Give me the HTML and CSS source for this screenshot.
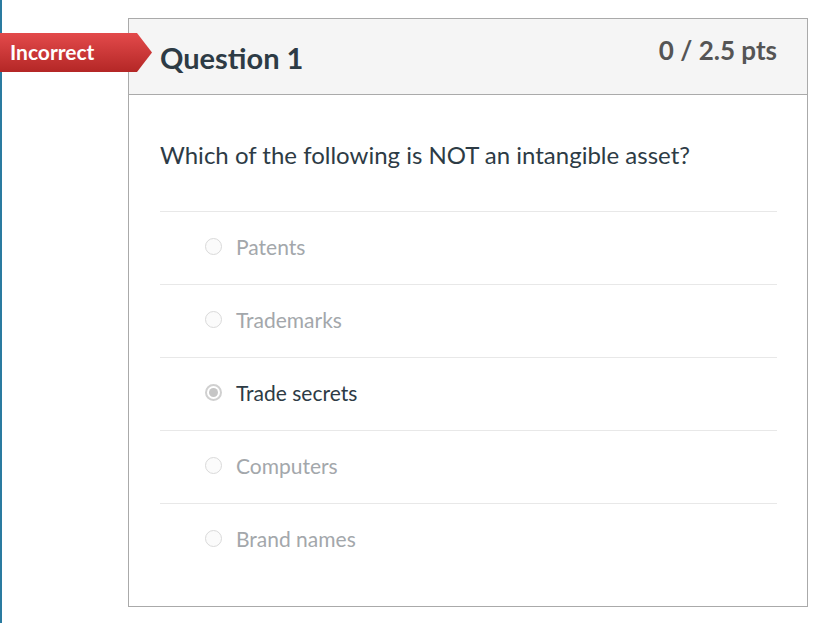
FILE: index.html
```html
<!DOCTYPE html>
<html>
<head>
<meta charset="utf-8">
<link rel="stylesheet" href="styles.css">
</head>
<body>
<div class="page">
  <div class="card">
    <div class="badge">Incorrect</div>
    <div class="header">
      <h2 class="title">Question 1</h2>
      <div class="points">0 / 2.5 pts</div>
    </div>
    <div class="body">
      <p class="question">Which of the following is NOT an intangible asset?</p>
      <div class="answers">
        <div class="answer"><span class="radio"></span><span class="label">Patents</span></div>
        <div class="answer"><span class="radio"></span><span class="label">Trademarks</span></div>
        <div class="answer selected"><span class="radio"></span><span class="label">Trade secrets</span></div>
        <div class="answer"><span class="radio"></span><span class="label">Computers</span></div>
        <div class="answer"><span class="radio"></span><span class="label">Brand names</span></div>
      </div>
    </div>
  </div>
</div>
</body>
</html>
```
FILE: styles.css
```css
html, body {
  margin: 0;
  padding: 0;
  background: #fff;
  font-family: "Lato", "Open Sans", sans-serif;
}
.page {
  box-sizing: border-box;
  height: 623px;
  border-left: 2px solid #2a7ba0;
  padding: 18px 0 0 126px;
}
.card {
  position: relative;
  box-sizing: border-box;
  width: 680px;
  height: 589px;
  border: 1px solid #aaaaaa;
}
.badge {
  position: absolute;
  left: -129px;
  top: 14px;
  width: 152px;
  height: 39px;
  box-sizing: border-box;
  padding-left: 10px;
  background: linear-gradient(#e34a4b, #b42726);
  clip-path: polygon(0 0, 137px 0, 100% 50%, 137px 100%, 0 100%);
  color: #fff;
  font-weight: 700;
  font-size: 21px;
  line-height: 38px;
}
.header {
  box-sizing: border-box;
  height: 76px;
  background: #f5f5f5;
  border-bottom: 1px solid #aaaaaa;
  display: flex;
  justify-content: space-between;
  align-items: flex-start;
  padding: 0 30px 0 31px;
}
.title {
  margin: 22px 0 0;
  font-size: 29px;
  line-height: 1.2;
  font-weight: 700;
  color: #2d3b45;
}
.points {
  margin-top: 16px;
  font-size: 26px;
  line-height: 1.2;
  font-weight: 700;
  color: #555555;
}
.body {
  padding: 0 30px 0 31px;
}
.question {
  margin: 0;
  padding: 43px 0 39px;
  font-size: 24px;
  line-height: 34px;
  color: #2d3b45;
}
.answer {
  display: flex;
  align-items: center;
  height: 73px;
  box-sizing: border-box;
  border-top: 1px solid #e8e8e8;
  padding-left: 45px;
  padding-bottom: 4px;
}
.radio {
  box-sizing: border-box;
  width: 17px;
  height: 17px;
  border-radius: 50%;
  border: 1px solid #dadada;
  background: #fbfbfb;
  margin-right: 14px;
  position: relative;
}
.label {
  font-size: 21px;
  color: #a3a7ab;
}
.selected .label {
  color: #2d3b45;
}
.selected .radio {
  border: 2px solid #d0d0d0;
  background: #fff;
}
.selected .radio::after {
  content: "";
  position: absolute;
  left: 2px;
  top: 2px;
  width: 9px;
  height: 9px;
  border-radius: 50%;
  background: #c6c6c6;
}
```
